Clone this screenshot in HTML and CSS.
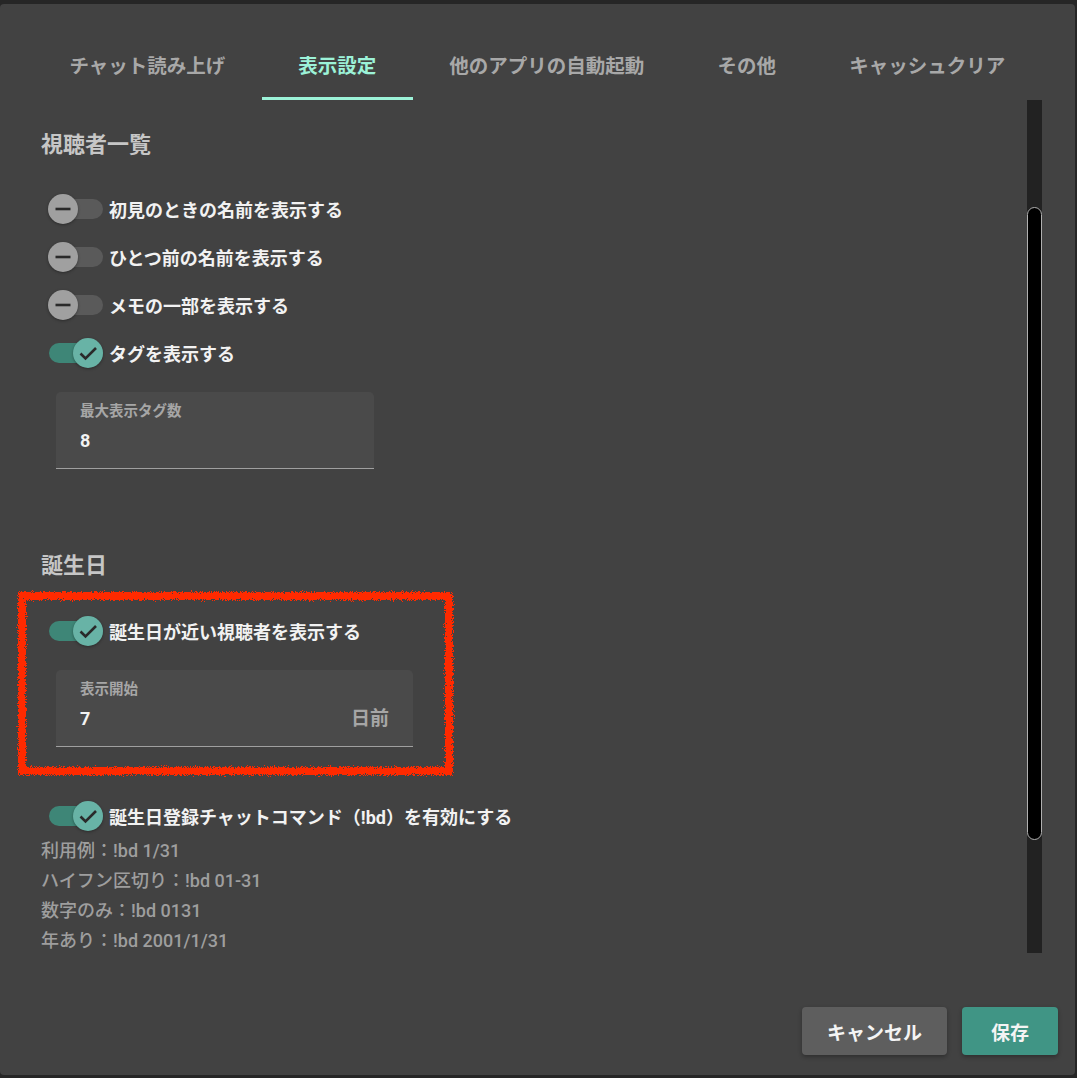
FILE: index.html
```html
<!DOCTYPE html>
<html>
<head>
    <title>設定</title>
    <link rel="stylesheet" href="styles.css">
</head>
<body>
    <svg class="defs" width="0" height="0">
        <filter id="rough">
            <feTurbulence type="fractalNoise" baseFrequency="1.1" numOctaves="3" result="noise"/>
            <feDisplacementMap in="SourceGraphic" in2="noise" scale="7"/>
        </filter>
    </svg>

    <div class="dialog">
        <div class="tabs">
            <div class="tab">チャット読み上げ</div>
            <div class="tab active">表示設定</div>
            <div class="tab">他のアプリの自動起動</div>
            <div class="tab short">その他</div>
            <div class="tab">キャッシュクリア</div>
        </div>

        <div class="body">
            <div class="content">
                <h2 class="section-title">視聴者一覧</h2>

                <div class="switch-row">
                    <div class="switch"><span class="thumb"><svg viewBox="0 0 24 24"><path d="M4.5 12h15"/></svg></span></div>
                    <span class="switch-label">初見のときの名前を表示する</span>
                </div>
                <div class="switch-row">
                    <div class="switch"><span class="thumb"><svg viewBox="0 0 24 24"><path d="M4.5 12h15"/></svg></span></div>
                    <span class="switch-label">ひとつ前の名前を表示する</span>
                </div>
                <div class="switch-row">
                    <div class="switch"><span class="thumb"><svg viewBox="0 0 24 24"><path d="M4.5 12h15"/></svg></span></div>
                    <span class="switch-label">メモの一部を表示する</span>
                </div>
                <div class="switch-row">
                    <div class="switch on"><span class="thumb"><svg viewBox="0 0 24 24"><path d="M4.5 12.5l5 5L20 7"/></svg></span></div>
                    <span class="switch-label">タグを表示する</span>
                </div>

                <div class="field tag-field">
                    <div class="field-label">最大表示タグ数</div>
                    <div class="field-value"><span>8</span></div>
                </div>

                <h2 class="section-title birthday">誕生日</h2>

                <div class="switch-row">
                    <div class="switch on"><span class="thumb"><svg viewBox="0 0 24 24"><path d="M4.5 12.5l5 5L20 7"/></svg></span></div>
                    <span class="switch-label">誕生日が近い視聴者を表示する</span>
                </div>

                <div class="field day-field">
                    <div class="field-label">表示開始</div>
                    <div class="field-value"><span>7</span><span class="suffix">日前</span></div>
                </div>

                <div class="switch-row command-row">
                    <div class="switch on"><span class="thumb"><svg viewBox="0 0 24 24"><path d="M4.5 12.5l5 5L20 7"/></svg></span></div>
                    <span class="switch-label">誕生日登録チャットコマンド（!bd）を有効にする</span>
                </div>

                <div class="hints">
                    <div>利用例：!bd 1/31</div>
                    <div>ハイフン区切り：!bd 01-31</div>
                    <div>数字のみ：!bd 0131</div>
                    <div>年あり：!bd 2001/1/31</div>
                </div>

                <!-- hand-drawn highlight -->
                <div class="marker"></div>
            </div>

            <div class="scrollbar"><div class="scroll-thumb"></div></div>
        </div>

        <div class="actions">
            <button class="btn cancel">キャンセル</button>
            <button class="btn save">保存</button>
        </div>
    </div>
</body>
</html>
```

FILE: styles.css
```css
body {
    margin: 0;
    background-color: #262626;
    font-family: Roboto, "Noto Sans CJK JP", sans-serif;
    color: #f2f2f2;
}
.defs {
    position: absolute;
}
.dialog {
    width: 1075px;
    height: 1071px;
    margin-top: 4px;
    background-color: #424242;
    border-radius: 4px;
    display: flex;
    flex-direction: column;
}

/* tabs */
.tabs {
    display: flex;
    height: 96px;
    padding-left: 33px;
    box-sizing: border-box;
}
.tab {
    margin-top: 30px;
    height: 66px;
    padding: 0 36.5px 2px;
    display: flex;
    align-items: center;
    justify-content: center;
    box-sizing: border-box;
    border-bottom: 3px solid transparent;
    font-size: 19.5px;
    font-weight: 700;
    color: #a8a8a8;
    white-space: nowrap;
}
.tab.short {
    min-width: 132px;
}
.tab.active {
    color: #9cf2d8;
    border-bottom-color: #9cf2d8;
}

/* scroll body */
.body {
    display: flex;
    height: 853px;
}
.content {
    flex: 1;
    position: relative;
    padding: 31px 0 0 41px;
}
.scrollbar {
    width: 15px;
    margin-right: 33px;
    background-color: #222;
}
.scroll-thumb {
    margin-top: 107px;
    height: 633px;
    box-sizing: border-box;
    background-color: #000;
    border: 1.5px solid #b0b0b0;
    border-radius: 8px;
}

.section-title {
    margin: 0 0 26px;
    font-size: 22px;
    line-height: 28px;
    font-weight: 700;
    color: #c6c6c6;
}
.section-title.birthday {
    margin-top: 83px;
    margin-bottom: 27px;
}

/* switches */
.switch-row {
    height: 48px;
    display: flex;
    align-items: center;
    padding-left: 8px;
}
.switch {
    position: relative;
    width: 54px;
    height: 20px;
    border-radius: 10px;
    background-color: #5a5a5a;
    flex-shrink: 0;
}
.thumb {
    position: absolute;
    top: -5px;
    left: -1px;
    width: 30px;
    height: 30px;
    border-radius: 50%;
    background-color: #a0a0a0;
    box-shadow: 0 1px 3px rgba(0,0,0,0.35);
    display: flex;
    align-items: center;
    justify-content: center;
}
.thumb svg {
    width: 24px;
    height: 24px;
    fill: none;
    stroke: #2a2a2a;
    stroke-width: 2.6;
}
.switch.on {
    background-color: #3e8677;
}
.switch.on .thumb {
    left: 24px;
    background-color: #68b3a6;
}
.switch-label {
    margin-left: 6px;
    font-size: 18px;
    font-weight: 700;
    color: #f2f2f2;
    white-space: nowrap;
}

/* text fields */
.field {
    margin: 15px 0 0 15px;
    height: 77px;
    box-sizing: border-box;
    padding: 11px 24px 0;
    background-color: #4a4a4a;
    border-radius: 5px 5px 0 0;
    border-bottom: 1px solid #a0a0a0;
}
.tag-field {
    width: 318px;
}
.day-field {
    width: 357px;
}
.field-label {
    font-size: 14.5px;
    line-height: 18px;
    font-weight: 700;
    color: #a6a6a6;
}
.field-value {
    margin-top: 9px;
    line-height: 22px;
    font-size: 18px;
    font-weight: 700;
    color: #f2f2f2;
    display: flex;
    justify-content: space-between;
}
.suffix {
    font-size: 19px;
    font-weight: 700;
    color: #a6a6a6;
}

.command-row {
    margin-top: 45px;
}
.hints {
    margin-top: -4px;
    font-size: 18px;
    line-height: 30px;
    font-weight: 500;
    color: #9e9e9e;
}

.marker {
    position: absolute;
    top: 492px;
    left: 18px;
    width: 435px;
    height: 183px;
    box-sizing: border-box;
    border: 8px solid #ff2a00;
    filter: url(#rough);
}

/* footer */
.actions {
    margin-top: auto;
    display: flex;
    justify-content: flex-end;
    gap: 15px;
    padding: 0 17px 20px 0;
}
.btn {
    height: 48px;
    border: none;
    border-radius: 4px;
    font-family: Roboto, "Noto Sans CJK JP", sans-serif;
    font-size: 19px;
    font-weight: 700;
    color: #f4f4f4;
    cursor: pointer;
    box-shadow: 0 2px 4px rgba(0,0,0,0.3);
}
.cancel {
    width: 145px;
    background-color: #5e5e5e;
}
.save {
    width: 96px;
    background-color: #409585;
}
```
